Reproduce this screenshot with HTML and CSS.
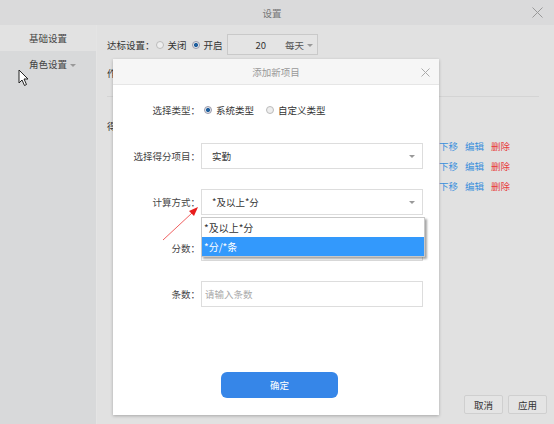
FILE: index.html
```html
<!DOCTYPE html>
<html>
<head>
  <title>设置</title>
  <link rel="stylesheet" href="styles.css">
</head>
<body>
  <div class="window">
    <div class="titlebar">
      <span class="title">设置</span>
      <svg class="close" width="11" height="11" viewBox="0 0 11 11"><path d="M0.5 0.5 L10.5 10.5 M10.5 0.5 L0.5 10.5" stroke="#999" stroke-width="1"/></svg>
    </div>
    <div class="frame">
      <div class="sidebar">
        <div class="nav-item active">基础设置</div>
        <div class="nav-item">角色设置 <span class="caret"></span></div>
      </div>
      <div class="main">
        <div class="goal-row">
          <span>达标设置：</span>
          <span class="radio"></span><span class="opt">关闭</span>
          <span class="radio checked"></span><span class="opt">开启</span>
          <div class="goal-box">
            <span class="goal-num">20</span>
            <span class="goal-unit">每天 <span class="caret"></span></span>
          </div>
        </div>
        <div class="line-row">作业提交：</div>
        <hr class="divider">
        <div class="line-row">得分项目：</div>
        <div class="item-row"><span class="ops"><a class="op">下移</a><a class="op">编辑</a><a class="op del">删除</a></span></div>
        <div class="item-row"><span class="ops"><a class="op">下移</a><a class="op">编辑</a><a class="op del">删除</a></span></div>
        <div class="item-row"><span class="ops"><a class="op">下移</a><a class="op">编辑</a><a class="op del">删除</a></span></div>
        <div class="footer">
          <button class="btn">取消</button>
          <button class="btn">应用</button>
        </div>
      </div>
    </div>

    <div class="modal">
      <div class="modal-head">
        <span>添加新项目</span>
        <svg class="modal-close" width="9" height="9" viewBox="0 0 9 9"><path d="M0.5 0.5 L8.5 8.5 M8.5 0.5 L0.5 8.5" stroke="#aaa" stroke-width="1"/></svg>
      </div>
      <div class="modal-body">
        <div class="form-row">
          <label class="form-label">选择类型：</label>
          <div class="radios">
            <span class="radio checked"></span><span class="opt">系统类型</span>
            <span class="radio gap"></span><span class="opt">自定义类型</span>
          </div>
        </div>
        <div class="form-row">
          <label class="form-label">选择得分项目：</label>
          <div class="select"><span>实勤</span><span class="caret"></span></div>
        </div>
        <div class="form-row">
          <label class="form-label">计算方式：</label>
          <div class="select"><span>*及以上*分</span><span class="caret"></span></div>
        </div>
        <div class="form-row">
          <label class="form-label">分数：</label>
          <div class="field"></div>
        </div>
        <div class="form-row">
          <label class="form-label">条数：</label>
          <div class="field placeholder">请输入条数</div>
        </div>
        <div class="actions">
          <button class="btn-primary">确定</button>
        </div>
      </div>
      <ul class="dropdown">
        <li>*及以上*分</li>
        <li class="selected">*分/*条</li>
      </ul>
    </div>

    <svg class="pointer" width="12" height="18" viewBox="0 0 12 18">
      <path d="M1 1 L1 14 L4 11 L6.5 16.5 L8.5 15.5 L6 10 L10 10 Z" fill="#fff" stroke="#222" stroke-width="1" stroke-linejoin="round"/>
    </svg>
    <svg class="annot" width="554" height="424" viewBox="0 0 554 424">
      <line x1="163" y1="240" x2="192" y2="213" stroke="#f06060" stroke-width="1"/>
      <path d="M198 207 L189 211 L194 216 Z" fill="#e81c1c"/>
    </svg>
  </div>
</body>
</html>
```

FILE: styles.css
```css
* {
  box-sizing: border-box;
}

body {
  margin: 0;
  font-family: "Noto Sans CJK SC", "Liberation Sans", sans-serif;
  font-size: 9.5px;
  color: #333;
}

.window {
  position: relative;
  width: 554px;
  height: 424px;
  overflow: hidden;
  background: #e0e0e0;
  display: flex;
  flex-direction: column;
}

.titlebar {
  position: relative;
  height: 25px;
  flex: none;
  background: #dadadb;
  display: flex;
  align-items: center;
  justify-content: center;
  color: #777;
}

.title {
  margin-left: -10px;
}

.close {
  position: absolute;
  right: 11px;
  top: 7px;
}

.frame {
  flex: 1;
  display: flex;
}

.sidebar {
  width: 96px;
  flex: none;
  background: #d8d9da;
}

.nav-item {
  height: 26px;
  line-height: 26px;
  padding-left: 29px;
  color: #444;
}

.nav-item.active {
  background: #e2e2e2;
}

.caret {
  display: inline-block;
  width: 0;
  height: 0;
  border-left: 3px solid transparent;
  border-right: 3px solid transparent;
  border-top: 3px solid #999;
  vertical-align: middle;
  margin-left: 1px;
}

.main {
  flex: 1;
  display: flex;
  flex-direction: column;
  padding: 9px 7px 10px 10px;
  background: #e1e1e1;
  border-left: 1px solid #e4e4e4;
}

.goal-row {
  height: 21px;
  display: flex;
  align-items: center;
}

.radio {
  display: inline-block;
  width: 8px;
  height: 8px;
  border-radius: 50%;
  border: 1px solid #bbb;
  background: #eee;
  margin: 0 4px 0 1px;
  flex: none;
}

.radio.checked {
  border-color: #99a;
  background: radial-gradient(circle, #1f5f9e 0 1.8px, #e4e6ea 2.3px);
}

.opt {
  margin-right: 4px;
}

.goal-box {
  width: 91px;
  height: 21px;
  border: 1px solid #c9c9c9;
  background: #e4e4e4;
  display: flex;
  align-items: center;
}

.goal-num {
  margin-left: 28px;
  color: #333;
}

.goal-unit {
  margin-left: 19px;
  color: #555;
}

.line-row {
  margin-top: 8px;
  height: 20px;
  line-height: 20px;
}

.divider {
  margin: 13px 8px 0 0;
  border: 0;
  border-top: 1px solid #d4d4d4;
  height: 0;
}

.divider + .line-row {
  margin-top: 19px;
}

.item-row {
  height: 20px;
  display: flex;
  align-items: center;
  padding-right: 37px;
}

.ops {
  margin-left: auto;
}

.op {
  color: #3a8fdc;
  margin-left: 7px;
}

.op.del {
  color: #e83c3c;
}

.footer {
  margin-top: auto;
  display: flex;
  justify-content: flex-end;
  gap: 5px;
}

.btn {
  width: 39px;
  height: 19px;
  padding: 0;
  font-family: inherit;
  font-size: 9.5px;
  color: #333;
  background: #e4e4e4;
  border: 1px solid #cfcfcf;
  border-radius: 2px;
}

/* modal */

.modal {
  position: absolute;
  left: 113px;
  top: 59px;
  width: 326px;
  height: 356px;
  background: #fff;
  box-shadow: 0 1px 3px rgba(0, 0, 0, 0.25);
}

.modal-head {
  position: relative;
  height: 26px;
  background: #f6f6f6;
  border-bottom: 1px solid #e6e6e6;
  display: flex;
  align-items: center;
  justify-content: center;
  color: #999;
}

.modal-close {
  position: absolute;
  right: 9px;
  top: 9px;
}

.modal-body {
  padding-top: 12px;
  display: flex;
  flex-direction: column;
  gap: 20px;
}

.form-row {
  height: 26px;
  display: flex;
  align-items: center;
}

.form-label {
  width: 88px;
  text-align: right;
  padding-right: 1px;
  color: #444;
}

.radios {
  display: flex;
  align-items: center;
  padding-left: 2px;
}

.radio.gap {
  margin-left: 8px;
}

.select,
.field {
  width: 222px;
  height: 26px;
  border: 1px solid #ddd;
  display: flex;
  align-items: center;
  padding-left: 10px;
  padding-right: 7px;
  justify-content: space-between;
}

.field {
  padding-left: 3px;
}

.placeholder {
  color: #aaa;
}

.actions {
  margin-top: 45px;
  display: flex;
  justify-content: center;
  padding-left: 7px;
}

.btn-primary {
  width: 117px;
  height: 26px;
  border: 0;
  border-radius: 6px;
  background: #3686e8;
  color: #fff;
  font-family: inherit;
  font-size: 9.5px;
}

.dropdown {
  position: absolute;
  left: 88px;
  top: 158px;
  width: 224px;
  margin: 0;
  padding: 0;
  list-style: none;
  background: #fff;
  border: 1px solid #c8c8c8;
  box-shadow: 2px 2px 2px rgba(0, 0, 0, 0.35);
}

.dropdown li {
  height: 19px;
  line-height: 19px;
  padding-left: 2px;
  font-size: 10px;
}

.dropdown li.selected {
  background: #3399fc;
  color: #fff;
}

.pointer {
  position: absolute;
  left: 18px;
  top: 69px;
}

.annot {
  position: absolute;
  left: 0;
  top: 0;
  pointer-events: none;
}
```
